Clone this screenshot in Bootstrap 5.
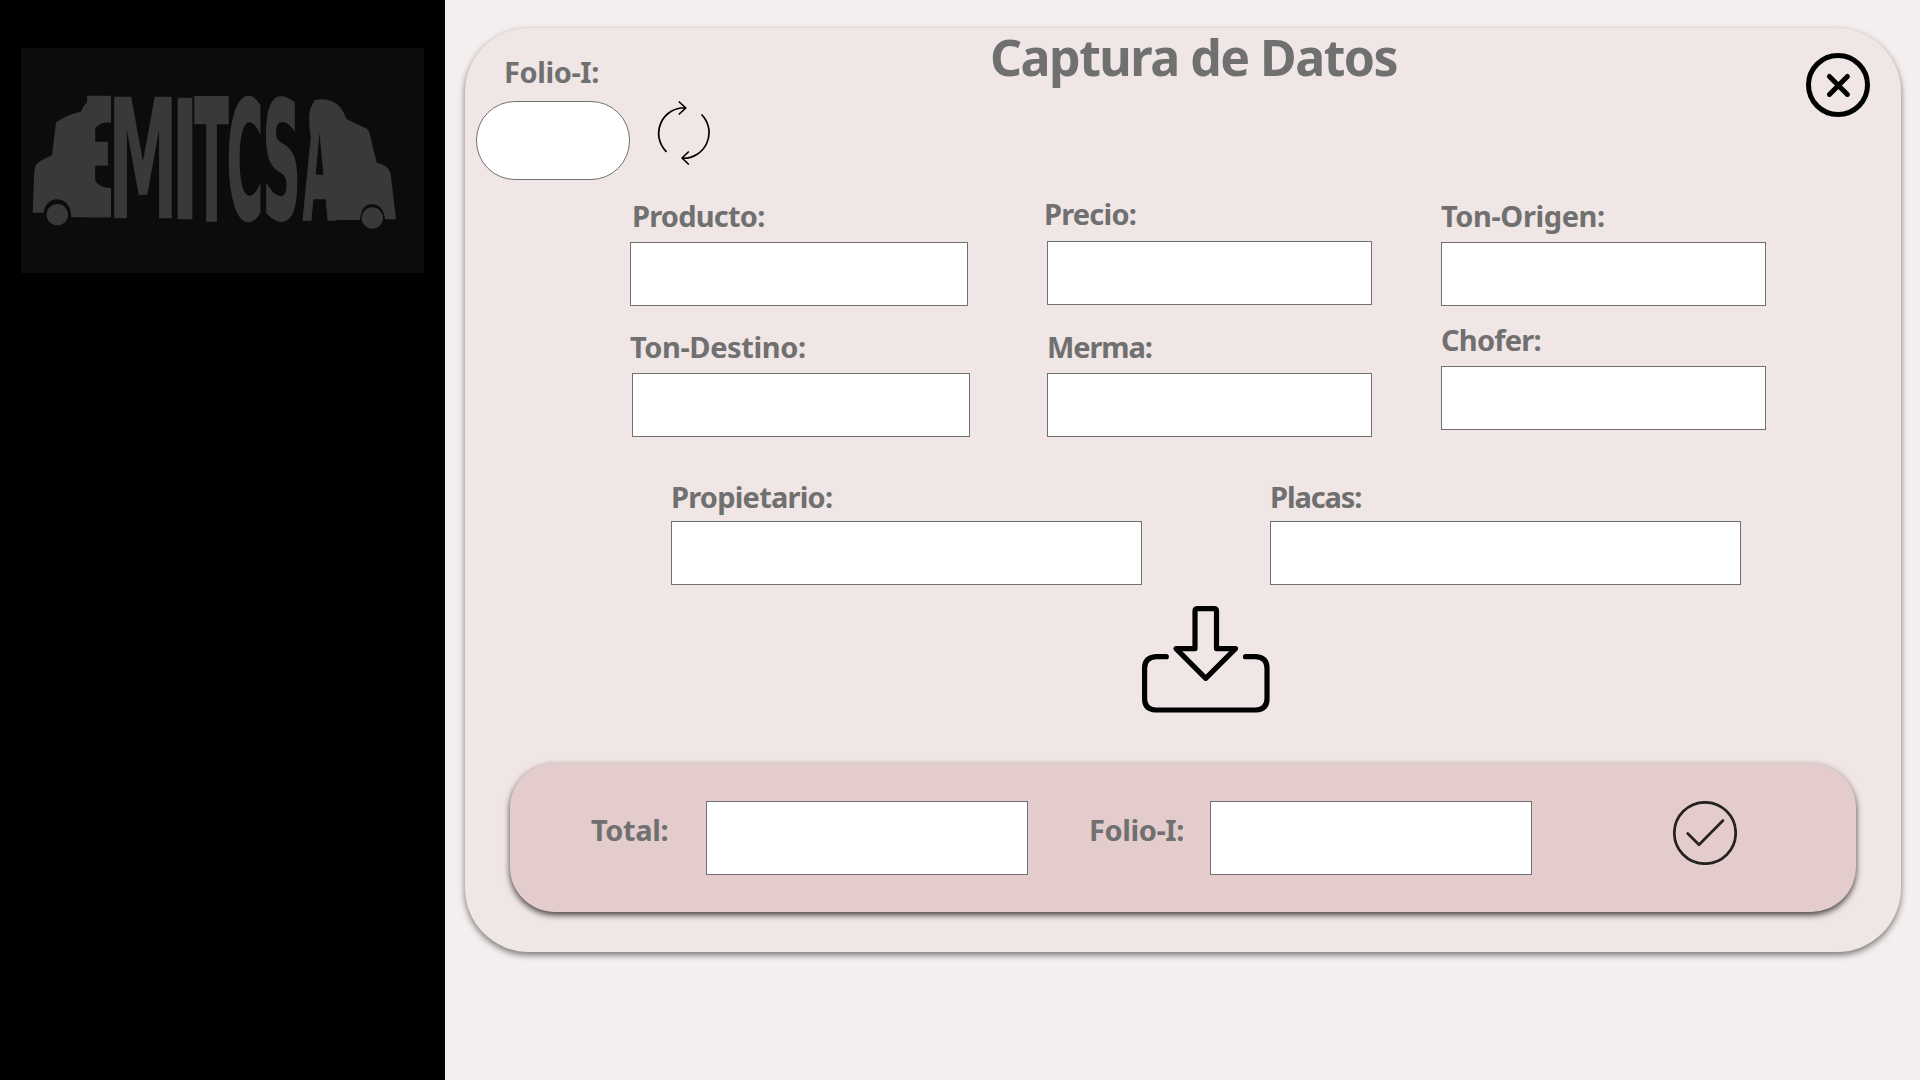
<!DOCTYPE html>
<html lang="es">
<head>
<meta charset="utf-8">
<meta name="viewport" content="width=device-width, initial-scale=1">
<title>Captura de Datos</title>
<link href="https://cdn.jsdelivr.net/npm/bootstrap@5.3.0/dist/css/bootstrap.min.css" rel="stylesheet">
<style>
  body { font-family: "Noto Sans", "Open Sans", sans-serif; background: #f4eeee; color: #707070; }
  .sidebar { width: 445px; background: #000; padding: 48px 0 0 21px; }
  .brand-logo { width: 403px; height: 225px; }
  .brand-logo text { font-family: "DejaVu Sans", sans-serif; font-weight: 700; font-size: 500px; }
  .capture { width: 1436px; height: 924px; margin: 28px 0 0 20px; background: #f0e6e5; border-radius: 64px; box-shadow: 0 3px 6px rgba(0,0,0,.5); }
  .capture > * { flex-shrink: 0; }
  .capture-head { height: 152px; }
  .folio-block { width: 154px; margin-left: 11px; padding-top: 24px; }
  .folio-block .field-label { margin: 0 0 9px 28px; }
  .btn-reload { margin: 73px 0 0 22px; }
  .capture-title { width: 420px; font-size: 50px; line-height: 56px; font-weight: 700; letter-spacing: -1.5px; margin: 1px 0 0 274px; white-space: nowrap; }
  .btn-close-form { margin: 25px 31px 0 auto; }
  .field-label { display: block; font-size: 29px; line-height: 40px; font-weight: 700; letter-spacing: -.4px; white-space: nowrap; margin: 0 0 6px; }
  .field-label.tight { letter-spacing: -.78px; }
  .field-label.tighter { letter-spacing: -1.1px; }
  .field-input { display: block; height: 64px; border: 1px solid #707070; border-radius: 0; background: #fff; padding: 0 12px; font-size: 24px; }
  .field-input.pill { height: 79px; border-radius: 39px; }
  .icon-btn { border: 0; background: none; padding: 0; line-height: 0; flex: none; }
  .icon-btn svg { display: block; fill: none; stroke: #000; stroke-linecap: round; stroke-linejoin: round; }
  .load-fields { padding: 14px 0 0 165px; }
  .field-col-a { width: 340px; gap: 21px; padding-top: 2px; }
  .field-col-b { width: 328px; gap: 22px; margin-left: 74px; }
  .field-col-c { width: 325px; gap: 14px; margin-left: 69px; padding-top: 2px; }
  .field-col-a .field-input { width: 338px; }
  .field-col-b .field-input { width: 325px; margin-left: 3px; }
  .field-col-b .field-label.raised { margin-bottom: 7px; }
  .nudge { margin-left: 2px; }
  .nudge-more { margin-left: 3px; }
  .owner-fields { padding-left: 206px; gap: 128px; margin-top: 40px; }
  .owner-fields .field-label { margin-bottom: 4px; }
  .owner-fields .field-input { width: 471px; }
  .btn-save { margin: 21px 0 0 677px; }
  .totals { width: 1346px; height: 149px; margin: 50px 0 0 45px; background: #e4cccc; border-radius: 45px; box-shadow: 0 3px 6px rgba(0,0,0,.72); padding: 38px 0 0 81px; }
  .totals .field-input { height: 74px; width: 322px; }
  .totals .field-label { width: 115px; margin: 9px 0 0; }
  .totals .field-label.wide { width: 121px; margin-left: 61px; }
  .btn-confirm { margin-left: 141px; }
  .btn-confirm svg { stroke: #262222; }
</style>
</head>
<body>
<div class="d-flex vh-100 overflow-hidden">
  <aside class="sidebar flex-shrink-0">
    <svg class="brand-logo d-block" viewBox="63 54 1209 675" fill="#393939" role="img" aria-label="EMITCSA">
      <rect x="63" y="54" width="1209" height="675" fill="#0c0c0c"/>
      <path d="M98 548L102 440Q103 410 110 402Q122 391 156 376L168 277Q205 252 243 245Q260 198 320 198H333V278Q280 272 275 330V413Q278 474 333 474V562H214Q211 510 172 508Q137 510 131 548Z"/>
      <circle cx="172" cy="554" r="32"/>
      <path d="M932 320Q914 208 965 208Q1020 208 1039 267L1098 295Q1106 299 1108 307L1130 398Q1168 407 1172 432L1188 568H1155Q1150 524 1116 523Q1083 524 1080 570H990V380L984 330Q980 292 962 292Z"/>
      <circle cx="1117" cy="564" r="32"/>
      <g stroke="#393939">
        <text transform="translate(250 562) scale(.255 1)">E</text>
        <text transform="translate(323 565) scale(.425 1)">M</text>
        <text transform="translate(512 566) scale(.46 .99)">I</text>
        <text transform="translate(584 566) scale(.295 .99)" stroke-width="14">T</text>
        <text transform="translate(681 565) scale(.293 .96)" stroke-width="14">C</text>
        <text transform="translate(788 565) scale(.315 .96)" stroke-width="12">S</text>
        <text transform="translate(908 570) scale(.26 .97)" stroke-width="8">A</text>
      </g>
    </svg>
  </aside>

  <main class="flex-grow-1">
    <section class="capture d-flex flex-column">
      <header class="capture-head d-flex align-items-start">
        <div class="folio-block">
          <label class="field-label" for="folio">Folio-I:</label>
          <input id="folio" class="field-input pill w-100">
        </div>
        <button class="icon-btn btn-reload" type="button" aria-label="Actualizar folio">
          <svg width="64" height="64" viewBox="0 0 64 64" stroke-width="1.7"><path d="M14 50.3A25.6 25.6 0 0 1 33.5 6.8M27.3 1l6.5 6-6.500 6M50 14A25.600 25.600 0 0 1 30.300 57.200M36.300 51L30 57l6.300 6"/></svg>
        </button>
        <h1 class="capture-title">Captura de Datos</h1>
        <button class="icon-btn btn-close-form" type="button" aria-label="Cerrar">
          <svg width="64" height="64" viewBox="0 0 64 64" stroke-width="5"><circle cx="32" cy="32" r="29.5"/><path d="M23.4 23.4l18 18M41.4 23.4l-18 18"/></svg>
        </button>
      </header>

      <div class="load-fields d-flex align-items-start">
        <div class="field-col-a d-flex flex-column">
          <div>
            <label class="field-label tight nudge" for="producto">Producto:</label>
            <input id="producto" class="field-input">
          </div>
          <div>
            <label class="field-label" for="destino">Ton-Destino:</label>
            <input id="destino" class="field-input nudge">
          </div>
        </div>
        <div class="field-col-b d-flex flex-column">
          <div>
            <label class="field-label tight raised" for="precio">Precio:</label>
            <input id="precio" class="field-input">
          </div>
          <div>
            <label class="field-label tighter nudge-more" for="merma">Merma:</label>
            <input id="merma" class="field-input">
          </div>
        </div>
        <div class="field-col-c d-flex flex-column">
          <div>
            <label class="field-label" for="origen">Ton-Origen:</label>
            <input id="origen" class="field-input w-100">
          </div>
          <div>
            <label class="field-label tight" for="chofer">Chofer:</label>
            <input id="chofer" class="field-input w-100">
          </div>
        </div>
      </div>

      <div class="owner-fields d-flex">
        <div>
          <label class="field-label tight" for="propietario">Propietario:</label>
          <input id="propietario" class="field-input">
        </div>
        <div>
          <label class="field-label tighter" for="placas">Placas:</label>
          <input id="placas" class="field-input">
        </div>
      </div>

      <button class="icon-btn btn-save align-self-start" type="button" aria-label="Guardar">
        <svg width="128" height="107" viewBox="0 0 128 107" stroke-width="5.2"><path d="M24.3 50.7H14Q2.6 51.5 2.6 62V93Q2.6 103.2 13.5 104H114Q125 103.2 125 93V62Q125 51.5 114 50.7H103.5"/><path d="M53 42.6V5Q53 2.6 55.5 2.6H72Q74.5 2.6 74.5 5V42.6H93.5L63.7 72.3 34 42.6Z"/></svg>
      </button>

      <div class="totals d-flex align-items-start">
        <label class="field-label" for="total">Total:</label>
        <input id="total" class="field-input">
        <label class="field-label wide" for="folio-total">Folio-I:</label>
        <input id="folio-total" class="field-input">
        <button class="icon-btn btn-confirm" type="button" aria-label="Confirmar">
          <svg width="64" height="64" viewBox="0 0 64 64" stroke-width="2.7"><circle cx="32" cy="32" r="30.7"/><path d="M14.7 32.5L26 43.7 50 19.5"/></svg>
        </button>
      </div>
    </section>
  </main>
</div>
<script src="https://cdn.jsdelivr.net/npm/bootstrap@5.3.0/dist/js/bootstrap.bundle.min.js"></script>
</body>
</html>
